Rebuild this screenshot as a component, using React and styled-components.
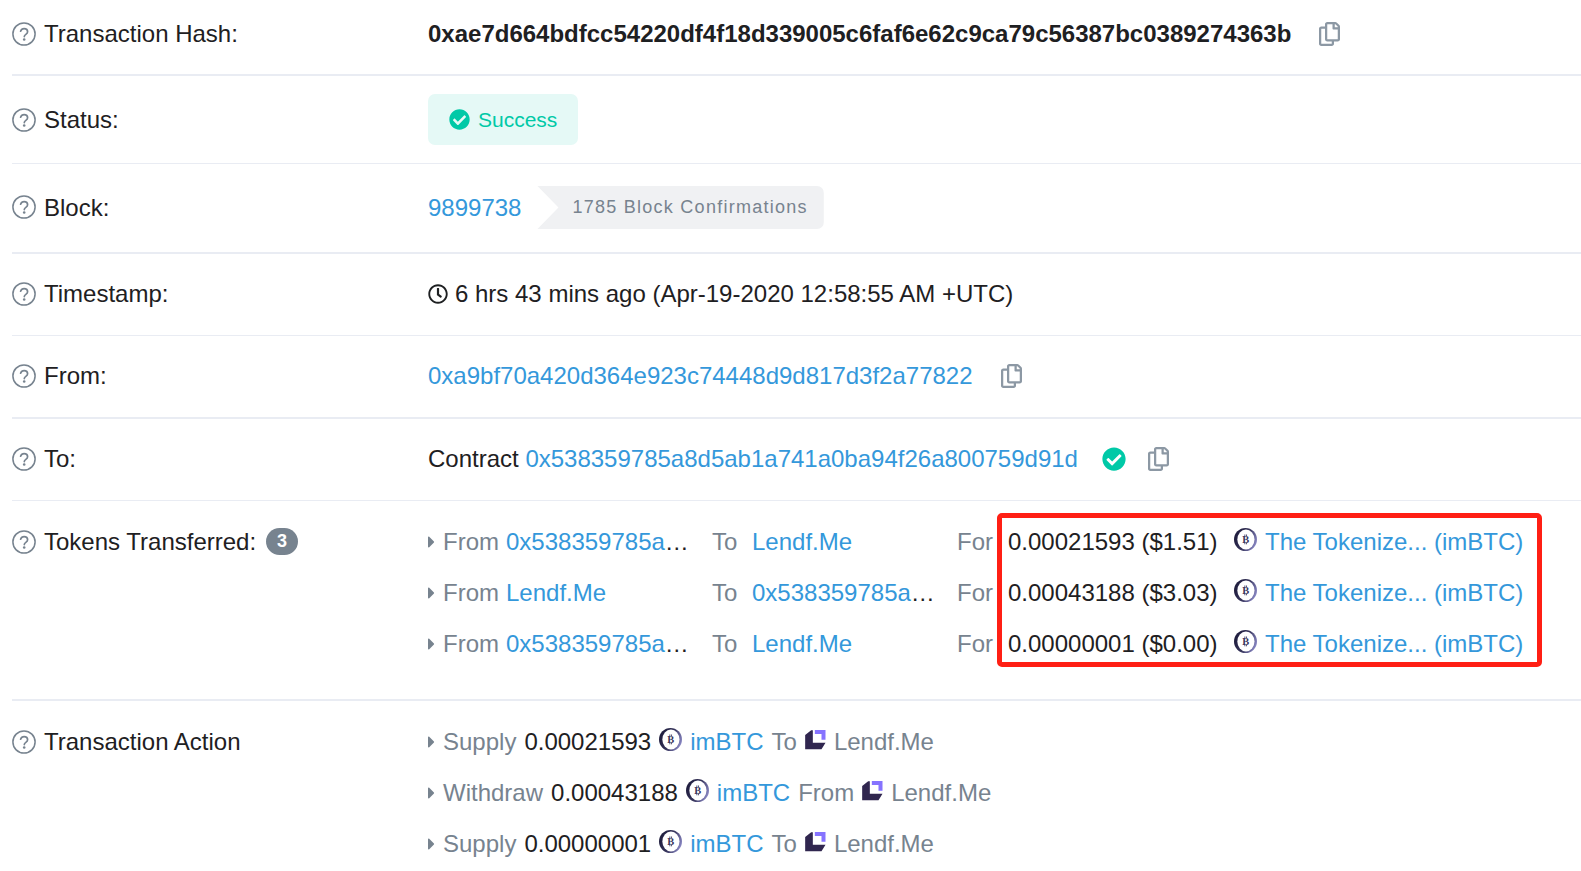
import styled, { createGlobalStyle, css } from 'styled-components';
import { FaCaretRight, FaCheckCircle, FaRegClock, FaRegCopy } from 'react-icons/fa';

const GlobalStyle = createGlobalStyle`
  * {
    box-sizing: border-box;
  }

  body {
    margin: 0;
    background: #fff;
    color: #1e2022;
    font-family: Arial, 'Liberation Sans', sans-serif;
    font-size: 24px;
    line-height: 37px;
  }
`

const Details = styled.main`
  padding: 15px 0 0 12px;
  white-space: nowrap;
`

const Row = styled.section`
  display: grid;
  grid-template-columns: 416px minmax(0, 1fr);
  padding: 21px 0 23px;
  border-bottom: ${({ $thick }) => ($thick ? '2px' : '1px')} solid #e9ecf3;

  ${({ $compact }) => $compact && css`
    padding: 18px 0;
  `}

  ${({ $top }) => $top && css`
    padding: 22px 0;
  `}

  &:first-child {
    padding: 0 0 22px;
  }

  &:last-child {
    border-bottom: 0;
  }
`

const Label = styled.div`
  display: flex;
  align-items: center;
  align-self: ${({ $top }) => ($top ? 'start' : 'center')};
  gap: 8px;
`

const Value = styled.div`
  display: flex;
  align-items: center;
`

const Link = styled.a`
  color: #3498db;
  text-decoration: none;
`

const Hash = styled.span`
  font-weight: 700;
`

const Muted = styled.span`
  color: #77838f;
`

const Count = styled.span`
  margin-left: 2px;
  padding: 0 11px;
  border-radius: 14px;
  background: #77838f;
  color: #fff;
  font-size: 18px;
  font-weight: 700;
  line-height: 27px;
`

const CopyButton = styled.button`
  display: flex;
  margin-left: ${({ $near }) => ($near ? '22px' : '28px')};
  padding: 0;
  border: 0;
  background: none;
  color: #8c98a4;
  font-size: 24px;
  cursor: pointer;

  svg {
    width: 21px;
  }
`

const Status = styled.span`
  display: flex;
  align-items: center;
  gap: 8px;
  padding: 0 21px;
  border-radius: 7px;
  background: #e5f9f6;
  color: #00c9a7;
  font-size: 21px;
  line-height: 51px;
`

const Ribbon = styled.span`
  margin: 1px 0 0 16px;
  padding: 0 16px 0 35px;
  border-radius: 0 7px 7px 0;
  background: #f0f1f3;
  clip-path: polygon(0 0, 100% 0, 100% 100%, 0 100%, 21px 50%);
  color: #77838f;
  font-size: 18px;
  line-height: 43px;
  letter-spacing: 0.07em;
`

const Clock = styled(FaRegClock)`
  margin-right: 7px;
  font-size: 20px;
`

const Verified = styled(FaCheckCircle)`
  margin-left: 24px;
  color: #00c9a7;
  font-size: 24px;
`

const List = styled.ul`
  position: relative;
  display: flex;
  flex-direction: column;
  gap: 14px;
  margin: 0;
  padding: 0;
  list-style: none;
  ${({ $spaced }) => $spaced && css`
    margin-bottom: 15px;
  `}
`

const Transfer = styled.li`
  display: grid;
  grid-template-columns: 15px 63px 206px 40px 205px 51px 226px 31px auto;
  align-items: center;
`

const Action = styled.li`
  display: flex;
  align-items: center;
  gap: 8px;
`

const Caret = styled(FaCaretRight)`
  width: 7px;
  height: 20px;
  color: #77838f;
`

// Logos ride a little above the text's middle
const Logo = styled.svg`
  margin-bottom: 4px;
`

// Red frame laid over the amounts and tokens
const Highlight = styled.li`
  position: absolute;
  top: -10px;
  bottom: -5px;
  left: 569px;
  width: 545px;
  border: 5px solid #ff1f14;
  border-radius: 5px;
  pointer-events: none;
`

const HelpIcon = () => (
  <svg width='24' height='24' viewBox='0 0 24 24' fill='none' stroke='#77838f' aria-hidden='true'>
    <circle cx='12' cy='12' r='11.1' strokeWidth='1.5' />
    <path d='M8.6 9.2C9.2 7.6 10.4 6.7 12.1 6.7c1.9 0 3.5 1.2 3.5 3 0 2.8-3.3 2.5-3.3 4.9' strokeWidth='1.7' strokeLinecap='round' />
    <circle cx='12.2' cy='17.5' r='1.3' fill='#77838f' stroke='none' />
  </svg>
)

const BtcIcon = () => (
  <Logo width='23' height='23' viewBox='0 0 22 22' aria-hidden='true'>
    <defs>
      <linearGradient id='ring' x1='0' y1='0.3' x2='1' y2='0.7'>
        <stop offset='0' stopColor='#1c1a3a' />
        <stop offset='0.5' stopColor='#37355c' />
        <stop offset='1' stopColor='#8f8dcb' />
      </linearGradient>
    </defs>
    <circle cx='11' cy='11' r='11' fill='url(#ring)' />
    <ellipse cx='11.4' cy='11' rx='8.2' ry='9.6' fill='#fff' />
    <path d='M10.4 6.2v1.6M12 6.2v1.6M10.4 14v1.6M12 14v1.6' stroke='#37355c' strokeWidth='0.8' />
    <text x='11.2' y='14.4' textAnchor='middle' fontFamily='Liberation Serif, serif' fontSize='10' fontWeight='700' fill='#37355c'>B</text>
  </Logo>
)

const LendfIcon = () => (
  <Logo width='21' height='20' viewBox='0 0 62 60' aria-hidden='true'>
    <path d='M0 15 18 1h5v37h38L49 58H0z' fill='#30264f' />
    <path d='M29 0h32v29H49V12H29z' fill='#8673ff' />
  </Logo>
)

const Copy = ({ label, near }) => (
  <CopyButton type='button' aria-label={label} $near={near}>
    <FaRegCopy />
  </CopyButton>
)

const Detail = ({ label, count, top, thick, compact, children }) => (
  <Row $top={top} $thick={thick} $compact={compact}>
    <Label $top={top}>
      <HelpIcon />
      <span>{label}</span>
      {count && <Count>{count}</Count>}
    </Label>
    <Value>{children}</Value>
  </Row>
)

const Party = ({ name }) => (
  <span>
    <Link href='#'>{name}</Link>
    {name.startsWith('0x') && '…'}
  </span>
)

const transfers = [
  { from: '0x538359785a', to: 'Lendf.Me', amount: '0.00021593 ($1.51)' },
  { from: 'Lendf.Me', to: '0x538359785a', amount: '0.00043188 ($3.03)' },
  { from: '0x538359785a', to: 'Lendf.Me', amount: '0.00000001 ($0.00)' },
]

const actions = [
  { verb: 'Supply', amount: '0.00021593', direction: 'To' },
  { verb: 'Withdraw', amount: '0.00043188', direction: 'From' },
  { verb: 'Supply', amount: '0.00000001', direction: 'To' },
]

export default function App() {
  return (
    <>
      <GlobalStyle />
      <Details>
        <Detail label='Transaction Hash:' thick>
          <Hash>0xae7d664bdfcc54220df4f18d339005c6faf6e62c9ca79c56387bc0389274363b</Hash>
          <Copy label='Copy transaction hash' />
        </Detail>
        <Detail label='Status:' compact>
          <Status>
            <FaCheckCircle />
            Success
          </Status>
        </Detail>
        <Detail label='Block:' thick>
          <Link href='#'>9899738</Link>
          <Ribbon>1785 Block Confirmations</Ribbon>
        </Detail>
        <Detail label='Timestamp:'>
          <Clock />
          6 hrs 43 mins ago (Apr-19-2020 12:58:55 AM +UTC)
        </Detail>
        <Detail label='From:' thick>
          <Link href='#'>0xa9bf70a420d364e923c74448d9d817d3f2a77822</Link>
          <Copy label='Copy sender address' />
        </Detail>
        <Detail label='To:'>
          <span>
            Contract <Link href='#'>0x538359785a8d5ab1a741a0ba94f26a800759d91d</Link>
          </span>
          <Verified />
          <Copy label='Copy contract address' near />
        </Detail>
        <Detail label='Tokens Transferred:' count='3' top thick>
          <List $spaced>
            {transfers.map(({ from, to, amount }, i) => (
              <Transfer key={i}>
                <Caret />
                <Muted>From</Muted>
                <Party name={from} />
                <Muted>To</Muted>
                <Party name={to} />
                <Muted>For</Muted>
                <span>{amount}</span>
                <BtcIcon />
                <Link href='#'>The Tokenize... (imBTC)</Link>
              </Transfer>
            ))}
            <Highlight aria-hidden='true' />
          </List>
        </Detail>
        <Detail label='Transaction Action' top>
          <List>
            {actions.map(({ verb, amount, direction }, i) => (
              <Action key={i}>
                <Caret />
                <Muted>{verb}</Muted>
                <span>{amount}</span>
                <BtcIcon />
                <Link href='#'>imBTC</Link>
                <Muted>{direction}</Muted>
                <LendfIcon />
                <Muted>Lendf.Me</Muted>
              </Action>
            ))}
          </List>
        </Detail>
      </Details>
    </>
  )
}
